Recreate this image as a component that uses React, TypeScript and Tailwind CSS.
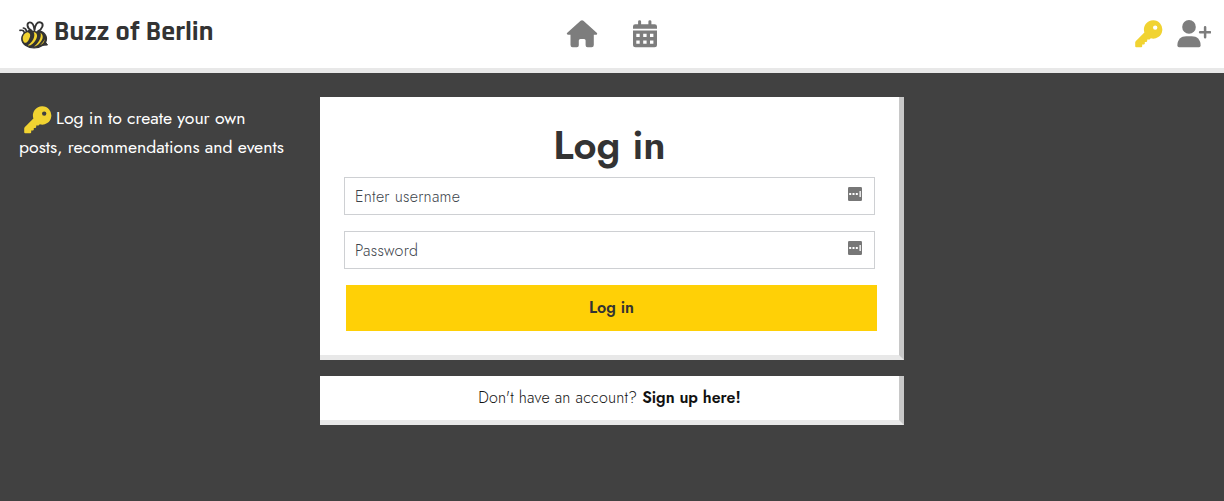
import React from "react";

function Bee() {
  return (
    <svg viewBox="0 0 30 30" className="-ml-px block h-[30px] w-[31px] shrink-0" fill="none" stroke="#333333" strokeLinecap="round" strokeLinejoin="round">
      <ellipse cx="15.6" cy="18.8" rx="12.4" ry="9.2" fill="#333333" strokeWidth="1.2" />
      <path d="M26.5 21.5 L29 25 L24.5 25.3" fill="#333333" strokeWidth="1" />
      <path d="M13 10.5 C8 8 8 2.6 11.3 2.4 C14.5 2.3 15.6 6.5 16 10.2 C16.5 5 18.6 1.4 22 2.4 C26 3.8 24 8.8 19.4 11.4" fill="#ffffff" strokeWidth="1.9" />
      <path d="M5.8 13 C5.6 11 4.8 9.8 1.5 10.4 M8 11.3 C7.7 9.2 7 8.4 4.9 8" strokeWidth="1.7" />
      <path d="M8.7 12.3 C12.2 12.9 12.5 16 10.4 19.4 C9.2 21.8 7.5 23.2 6 22.7 C3.6 20.8 3 14.2 8.7 12.3Z" fill="#f1d331" stroke="none" />
      <path d="M15.2 12 C19.8 13 19.2 17.5 16.2 21.6 C14.2 24.6 11.2 26.3 9.2 25.2 C13.6 22.9 17.4 17 15.2 12Z" fill="#f1d331" stroke="none" />
      <path d="M22 12.7 C25.2 15 25 19 21.3 23 C19.4 25.2 17.4 26.3 15.5 26.4 C19.8 23.4 23.4 17.5 22 12.7Z" fill="#f1d331" stroke="none" />
      <path d="M26.3 19 C26.2 22 24 24.4 21.5 25.3 C23.8 23.3 25.2 21.3 26.3 19Z" fill="#f1d331" stroke="none" />
    </svg>
  );
}

function Key() {
  return (
    <svg viewBox="0 0 28 28" className="block h-7 w-7" fill="#f1d331">
      <path fillRule="evenodd" d="M18.3 0.2 A9.2 9.2 0 1 1 15.8 18.3 L14.8 19.2 Q14.5 19.6 13.9 19.6 H12.2 V21 Q12.2 21.8 11.4 21.9 L9.8 22 V23.6 Q9.8 24.4 9 24.4 H7.2 V26.3 Q7.2 27.3 6.2 27.3 H1.2 Q0.2 27.3 0.2 26.3 V22.5 Q0.2 21.6 0.9 20.9 L9.4 12.4 A9.2 9.2 0 0 1 18.3 0.2 Z M20.2 5.4 A2.2 2.2 0 1 0 20.2 9.8 A2.2 2.2 0 1 0 20.2 5.4Z" />
    </svg>
  );
}

function House() {
  return (
    <svg viewBox="0 0 32 28" className="block h-7 w-8" fill="#7d7d7d">
      <path d="M14.6 0.8 Q16 -0.4 17.4 0.8 L30.7 12.7 Q31.5 13.5 31 14.2 Q30.7 14.8 29.8 14.8 H27.8 V25 Q27.8 27.2 25.6 27.2 H21.5 Q19.6 27.2 19.6 25.2 V20.5 Q19.6 19 18.1 19 H14.4 Q12.8 19 12.8 20.5 V25.2 Q12.8 27.2 10.9 27.2 H6.6 Q4.5 27.2 4.5 25 V14.8 H2.2 Q1.2 14.8 0.9 14.1 Q0.6 13.4 1.3 12.7Z" />
    </svg>
  );
}

function Calendar() {
  return (
    <svg viewBox="0 0 24 28" className="block h-7 w-6" fill="#7d7d7d">
      <path d="M2.2 4.2 H5.1 V1.6 Q5.1 0.3 6.6 0.3 Q8.1 0.3 8.1 1.6 V4.2 H15.4 V1.6 Q15.4 0.3 16.9 0.3 Q18.4 0.3 18.4 1.6 V4.2 H21.6 Q24 4.2 24 6.6 V8.7 H0 V6.6 Q0 4.2 2.2 4.2Z" />
      <path fillRule="evenodd" d="M0 10.5 H24 V24.7 Q24 27.2 21.5 27.2 H2.5 Q0 27.2 0 24.7Z M3.3 13.8 V17.1 H6.7 V13.8Z M10.2 13.8 V17.1 H13.6 V13.8Z M17 13.8 V17.1 H20.4 V13.8Z M3.3 20.5 V23.8 H6.7 V20.5Z M10.2 20.5 V23.8 H13.6 V20.5Z M17 20.5 V23.8 H20.4 V20.5Z" />
    </svg>
  );
}

function AddUser() {
  return (
    <svg viewBox="0 0 34 28" className="block h-7 w-[34px]" fill="#7d7d7d">
      <circle cx="12" cy="6.9" r="6.8" />
      <path d="M9.2 16.2 H14.8 C20 16.2 23.6 19.6 23.6 25 V25.6 Q23.6 27.2 22 27.2 H2 Q0.4 27.2 0.4 25.6 V25 C0.4 19.6 4 16.2 9.2 16.2Z" />
      <path d="M28.1 7.3 V17.3 M23.1 12.3 H33.1" fill="none" stroke="#7d7d7d" strokeWidth="2.5" strokeLinecap="round" />
    </svg>
  );
}

function ManagerIcon() {
  return (
    <svg viewBox="0 0 14 14" className="mb-[5px] block h-[14px] w-[14px]">
      <rect width="14" height="14" rx="1.3" fill="#777777" />
      <path d="M1.2 6h2v2h-2z M4.5 6h2v2h-2z M7.8 6h2v2h-2z M11.5 4h1.3v6h-1.3z" fill="#ffffff" />
    </svg>
  );
}

function Field({ label, type }: { label: string; type: string }) {
  return (
    <label className="mb-4 flex h-[38px] w-[531px] items-center border border-[#ced0d3] bg-white pl-[10px] pr-3">
      <input
        type={type}
        placeholder={label}
        className="min-w-0 flex-1 pt-0.5 text-[16px] font-light tracking-[0.25px] text-[#3c434a] outline-none placeholder:text-[#3c434a]"
      />
      <ManagerIcon />
    </label>
  );
}

export default function App() {
  return (
    <div className="min-h-[501px] bg-[#414141] font-['Jost','Lato',sans-serif] text-[#333333]">
      <header className="flex h-[73px] items-start justify-between border-b-[5px] border-[#e8e8e8] bg-white pl-[19px] pr-[13px] pt-5">
        <a className="flex w-[547px] items-start" href="#">
          <Bee />
          <span className="ml-[5px] mt-[-6px] whitespace-nowrap font-['Rajdhani','Roboto',sans-serif] text-[28px] font-bold leading-9">Buzz of Berlin</span>
        </a>
        <nav className="flex flex-1 gap-[35px]">
          <a href="#" aria-label="Home"><House /></a>
          <a href="#" aria-label="Calendar"><Calendar /></a>
        </nav>
        <nav className="flex gap-[14px]">
          <a href="#" aria-label="Log in"><Key /></a>
          <a href="#" aria-label="Sign up"><AddUser /></a>
        </nav>
      </header>
      <div className="flex items-start pt-6">
        <aside className="w-[320px] shrink-0 pl-[19px] pt-[9px] text-[17.6px] text-white">
          <div className="flex h-7 items-start whitespace-nowrap pl-[5px]">
            <Key />
            <span className="ml-1 leading-6">Log in to create your own</span>
          </div>
          <p className="whitespace-nowrap leading-[26px]">posts, recommendations and events</p>
        </aside>
        <main className="w-[584px]">
          <section className="h-[263px] border-b-[5px] border-r-[5px] border-b-[#e8e8e8] border-r-[#c8c8c8] bg-white pl-6 pt-6">
            <h1 className="h-14 w-[531px] text-center text-[40px] font-semibold leading-[48px]">Log in</h1>
            <form>
              <Field label="Enter username" type="text" />
              <Field label="Password" type="password" />
              <button type="button" className="ml-0.5 block h-[46px] w-[531px] bg-[#ffd006] text-center text-[16px] font-semibold">Log in</button>
            </form>
          </section>
          <section className="mt-4 h-[49px] border-b-[5px] border-r-[5px] border-b-[#e8e8e8] border-r-[#c8c8c8] bg-white text-center text-[16px] font-light leading-[43px] tracking-[0.18px] text-[#111111]">
            Don't have an account? <a href="#" className="font-semibold tracking-normal">Sign up here!</a>
          </section>
        </main>
      </div>
    </div>
  );
}
